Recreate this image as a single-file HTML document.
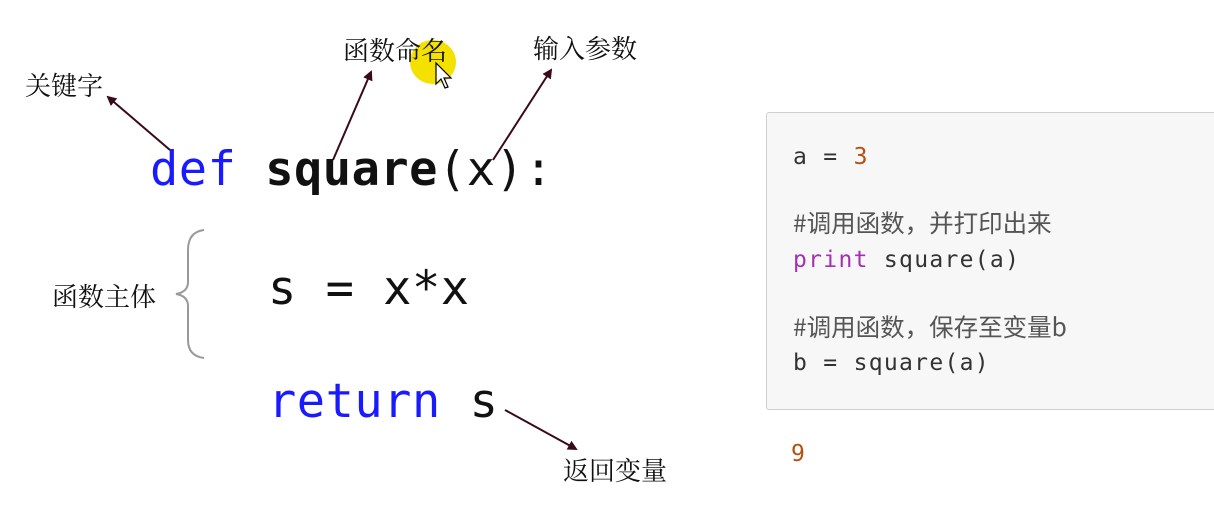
<!DOCTYPE html>
<html><head><meta charset="utf-8"><style>
body{margin:0;width:1214px;height:521px;background:#fff;position:relative;overflow:hidden}
.l{position:absolute;font-family:"Liberation Serif","Noto Serif CJK SC",serif;font-size:26px;color:#111;line-height:1}
.big{position:absolute;font-family:"DejaVu Sans Mono",monospace;font-size:47px;line-height:1;color:#111;white-space:pre;letter-spacing:0.5px}
.box{position:absolute;left:766px;top:112px;width:460px;height:296px;background:#f7f7f7;border:1px solid #cfcfcf;border-radius:3px}
.c{position:absolute;font-family:"DejaVu Sans Mono","Noto Sans CJK SC",monospace;font-size:23px;line-height:1;color:#333;white-space:pre;letter-spacing:1.3px}
.cm{font-family:"Noto Sans CJK SC",sans-serif;font-size:24.5px;color:#555;letter-spacing:0}
</style></head><body>
<div style="position:absolute;left:410px;top:40px;width:46px;height:44px;border-radius:50%;background:#f4e100"></div>
<div class="l" style="left:25px;top:74px">关键字</div>
<div class="l" style="left:343px;top:39px">函数命名</div>
<div class="l" style="left:533px;top:37px">输入参数</div>
<div class="l" style="left:52px;top:285px">函数主体</div>
<div class="l" style="left:563px;top:459px">返回变量</div>
<svg style="position:absolute;left:0;top:0" width="1214" height="521">
<defs><marker id="a" markerWidth="10" markerHeight="10" refX="8" refY="5" orient="auto" markerUnits="userSpaceOnUse"><path d="M0,0L10,5L0,10z" fill="#3a0a1a"/></marker></defs>
<g stroke="#3a0a1a" stroke-width="2" fill="none">
<line x1="170" y1="150" x2="108" y2="97" marker-end="url(#a)"/>
<line x1="333" y1="160" x2="371" y2="72" marker-end="url(#a)"/>
<line x1="493" y1="160" x2="551" y2="70" marker-end="url(#a)"/>
<line x1="505" y1="410" x2="576" y2="449" marker-end="url(#a)"/>
</g>
<path d="M204,230 Q188,232 188,250 L188,282 Q188,292 176,294 Q188,296 188,306 L188,340 Q188,356 204,358" stroke="#999" stroke-width="2" fill="none"/>
<path d="M436,63 L436,84 L441,79 L445,88 L448,87 L444,78 L451,78 Z" fill="#fff" stroke="#000" stroke-width="1.2"/>
</svg>
<div class="big" style="left:150px;top:146px"><span style="color:#1a1aff">def</span> <b>square</b>(x):</div>
<div class="big" style="left:268px;top:265px">s = x*x</div>
<div class="big" style="left:268px;top:378px"><span style="color:#1a1aff">return</span> s</div>
<div class="box"></div>
<div class="c" style="left:793px;top:146px">a = <span style="color:#b5500f">3</span></div>
<div class="c" style="left:793px;top:211px"><span class="cm">#调用函数，并打印出来</span></div>
<div class="c" style="left:793px;top:249px"><span style="color:#a530b0">print</span> square(a)</div>
<div class="c" style="left:793px;top:315px"><span class="cm">#调用函数，保存至变量b</span></div>
<div class="c" style="left:793px;top:352px">b = square(a)</div>
<div class="c" style="left:791px;top:443px;color:#b5500f">9</div>
</body></html>
